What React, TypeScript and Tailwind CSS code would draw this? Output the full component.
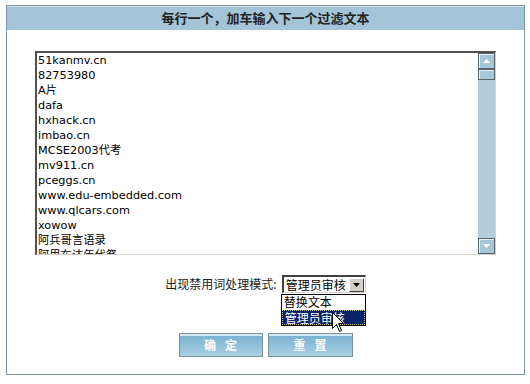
import React from "react";

const lines = [
  "51kanmv.cn",
  "82753980",
  "A片",
  "dafa",
  "hxhack.cn",
  "imbao.cn",
  "MCSE2003代考",
  "mv911.cn",
  "pceggs.cn",
  "www.edu-embedded.com",
  "www.qlcars.com",
  "xowow",
  "阿兵哥言语录",
  "阿里布达年代祭",
];

function ScrollBtn({ down }: { down?: boolean }) {
  return (
    <div className="h-[16px] shrink-0 bg-[#a6c7d9] border border-[#56666c] shadow-[inset_1px_1px_0_#e8f1f6] flex items-center justify-center">
      <svg width="7" height="4" viewBox="0 0 7 4">
        <path d={down ? "M0 0h7L3.5 4z" : "M3.5 0L7 4H0z"} fill="#fff" />
      </svg>
    </div>
  );
}

export default function App() {
  return (
    <div className="w-[530px] h-[384px] bg-white pt-[5px] pl-[6px] font-['DejaVu_Sans','Noto_Sans_CJK_SC',sans-serif]">
      <div className="w-[519px] h-[370px] border border-[#7d969f] flex flex-col">
        {/* header */}
        <div className="h-[24px] shrink-0 bg-[#a3c5d7] shadow-[inset_0_1px_0_#cfe2ec] flex items-center justify-center text-[13px] font-bold text-[#222] font-['Noto_Sans_CJK_SC',sans-serif]">
          每行一个，加车输入下一个过滤文本
        </div>

        <div className="flex flex-col items-center pt-[21px]">
          {/* textarea */}
          <div className="w-[461px] h-[204px] flex border-t-2 border-l-2 border-t-[#505050] border-l-[#505050] border-b border-r border-b-[#d4d0c8] border-r-[#d4d0c8] bg-white">
            <div className="flex-1 overflow-hidden pl-[1px] text-[11.3px] leading-[15px] text-black">
              {lines.map((l) => (
                <div key={l} className="whitespace-nowrap">
                  {l}
                </div>
              ))}
            </div>
            <div className="w-[17px] flex flex-col bg-[#b2ccda]">
              <ScrollBtn />
              <div className="h-[11px] shrink-0 bg-[#a6c7d9] border border-[#56666c] shadow-[inset_1px_1px_0_#e8f1f6]" />
              <div className="flex-1" />
              <ScrollBtn down />
            </div>
          </div>

          {/* mode row */}
          <div className="mt-[20px] h-[18px] flex items-center gap-[5px] font-['Noto_Sans_CJK_SC',sans-serif] text-[12px] text-[#222]">
            <span>出现禁用词处理模式:</span>
            <div className="relative">
              <div className="w-[84px] h-[18px] flex items-center border-t-2 border-l-2 border-t-[#404040] border-l-[#404040] border-b border-r border-b-[#d4d0c8] border-r-[#d4d0c8] bg-white">
                <span className="flex-1 pl-[2px] leading-none text-black">管理员审核</span>
                <div className="w-[15px] h-[14px] mr-[1px] bg-[#d4d0c8] border border-t-white border-l-white border-b-[#404040] border-r-[#404040] flex items-center justify-center">
                  <svg width="7" height="4" viewBox="0 0 7 4">
                    <path d="M0 0h7L3.5 4z" fill="#000" />
                  </svg>
                </div>
              </div>
              <div className="absolute top-[19px] left-[-1px] w-[85px] border border-black bg-white flex flex-col leading-[14px]">
                <div className="h-[15px] pl-[2px] text-black">替换文本</div>
                <div className="h-[15px] pl-[2px] bg-[#0a246a] text-white border border-dotted border-[#c8c080]">
                  管理员审核
                </div>
              </div>
              <svg
                className="absolute left-[50px] top-[37px]"
                width="13"
                height="21"
                viewBox="0 0 13 21"
              >
                <path
                  d="M0.5 0.5V16.5L4.5 12.5L7.5 19.5L9.5 18.5L6.5 11.5H11.5Z"
                  fill="#fff"
                  stroke="#000"
                  strokeWidth="1"
                  strokeLinejoin="miter"
                />
              </svg>
            </div>
          </div>

          {/* buttons */}
          <div className="mt-[40px] flex gap-[5px] font-['Noto_Sans_CJK_SC',sans-serif]">
            <button className="w-[84px] h-[24px] border border-[#7c939b] bg-gradient-to-b from-[#76b0d1] to-[#abcfe2] shadow-[inset_0_2px_0_#d6e8f1] flex items-center justify-center gap-[9px] text-[12px] font-bold text-white">
              <span>确</span>
              <span>定</span>
            </button>
            <button className="w-[85px] h-[24px] border border-[#7c939b] bg-gradient-to-b from-[#76b0d1] to-[#abcfe2] shadow-[inset_0_2px_0_#d6e8f1] flex items-center justify-center gap-[9px] text-[12px] font-bold text-white">
              <span>重</span>
              <span>置</span>
            </button>
          </div>
        </div>
      </div>
    </div>
  );
}
